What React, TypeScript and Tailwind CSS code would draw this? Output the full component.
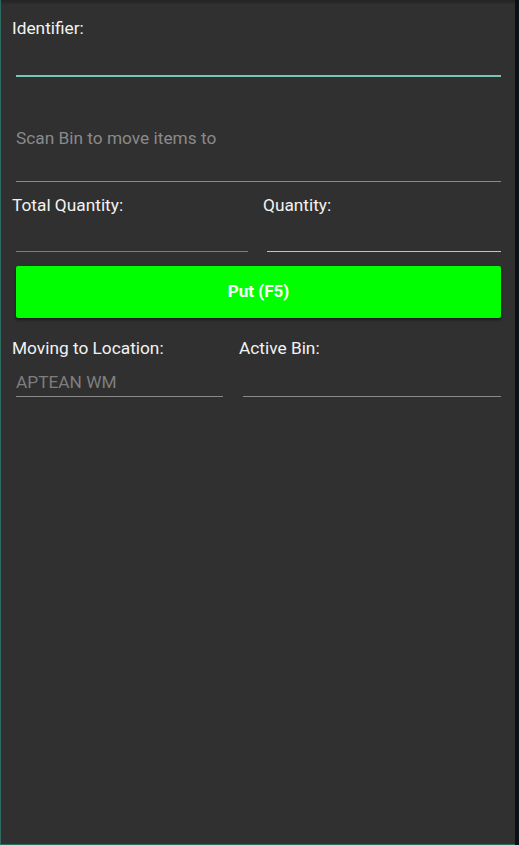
export default function App() {
  return (
    <div className="w-[519px] h-[845px] flex bg-[#0a1016] overflow-hidden" style={{ fontFamily: 'Roboto, "Noto Sans", sans-serif' }}>
      <div className="w-[515px] h-[845px] flex flex-col bg-[#303030] border-l border-b border-[#2d6a60]">
        <div className="h-[4px] bg-gradient-to-b from-[#232323] to-[#2c2c2c]" />
        <div className="flex flex-col pl-[11px] pr-[14px]">
          {/* Identifier */}
          <div className="mt-[14px] text-[17.3px] leading-[20px] text-[#f2f2f2]">Identifier:</div>
          <div className="ml-[4px] h-[39px] border-b-2 border-[#78c6ba]" />
          {/* Scan bin */}
          <div className="ml-[4px] mt-[51px] h-[54px] border-b-[1.5px] border-[#8a8a8a] text-[17.3px] leading-[20px] text-[#8a8a8a]">
            Scan Bin to move items to
          </div>
          {/* Quantities */}
          <div className="mt-[13px] flex gap-[15px]">
            <div className="w-[236px] flex flex-col">
              <div className="text-[17.3px] leading-[20px] text-[#f2f2f2]">Total Quantity:</div>
              <div className="ml-[4px] h-[37px] border-b-[1.5px] border-[#7c7c7c]" />
            </div>
            <div className="flex-1 flex flex-col">
              <div className="text-[17.3px] leading-[20px] text-[#f2f2f2]">Quantity:</div>
              <div className="ml-[4px] h-[37px] border-b-[1.5px] border-[#c4c4c4]" />
            </div>
          </div>
          {/* Button */}
          <button className="ml-[4px] mt-[14px] h-[52px] rounded-[2px] bg-[#00ff00] text-white font-bold text-[17px] shadow-[0_2px_3px_rgba(0,0,0,0.45)]">
            Put (F5)
          </button>
          {/* Location */}
          <div className="mt-[20px] flex gap-[16px]">
            <div className="w-[211px] flex flex-col">
              <div className="text-[17.3px] leading-[20px] text-[#f2f2f2]">Moving to Location:</div>
              <div className="ml-[4px] h-[39px] pt-[14px] border-b-[1.5px] border-[#8a8a8a] text-[17.3px] leading-[20px] text-[#7e7e7e]">
                APTEAN WM
              </div>
            </div>
            <div className="flex-1 flex flex-col">
              <div className="text-[17.3px] leading-[20px] text-[#f2f2f2]">Active Bin:</div>
              <div className="ml-[4px] h-[39px] border-b-[1.5px] border-[#8a8a8a]" />
            </div>
          </div>
        </div>
      </div>
    </div>
  );
}
